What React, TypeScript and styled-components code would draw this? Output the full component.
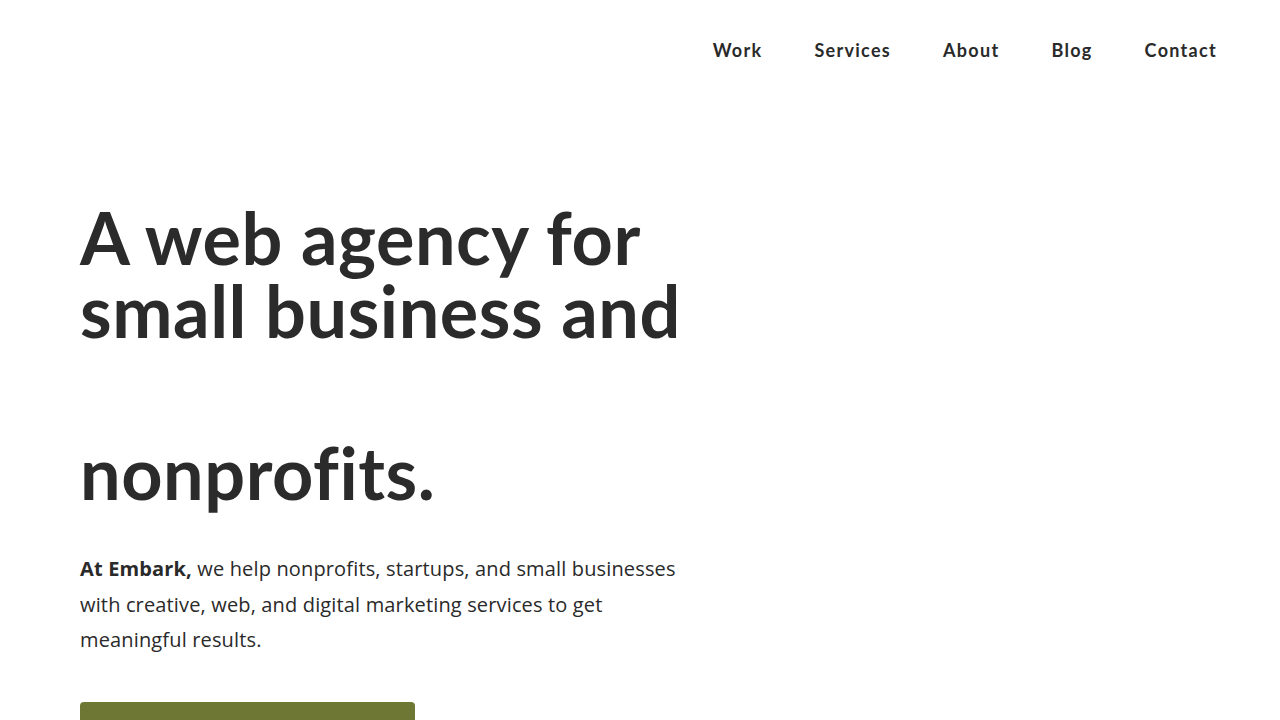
import styled, { createGlobalStyle } from "styled-components";

const GlobalStyle = createGlobalStyle`
  html, body {
    margin: 0;
    padding: 0;
    background: #ffffff;
  }
  body {
    font-family: "Lato", "Liberation Sans", sans-serif;
    color: #2a2a2a;
  }
`;

const navLinks = ["Work", "Services", "About", "Blog", "Contact"];

export default function App() {
  return (
    <Page>
      <GlobalStyle />
      <Header>
        <Nav>
          {navLinks.map((link) => (
            <NavLink key={link} href="#">
              {link}
            </NavLink>
          ))}
        </Nav>
      </Header>

      <Hero>
        <Heading>
          <HeadingLine>A web agency for</HeadingLine>
          <HeadingLine>small business and</HeadingLine>
          <HeadingLine $gap>nonprofits.</HeadingLine>
        </Heading>
        <Intro>
          <strong>At Embark,</strong> we help nonprofits, startups, and small
          businesses with creative, web, and digital marketing services to get
          meaningful results.
        </Intro>
        <CtaButton href="#">Let&apos;s work together</CtaButton>
      </Hero>
    </Page>
  );
}

const Page = styled.div`
  width: 1280px;
  height: 720px;
  overflow: hidden;
`;

const Header = styled.header`
  display: flex;
  justify-content: flex-end;
  padding: 36px 63px 0 80px;
`;

const Nav = styled.nav`
  display: flex;
  gap: 52px;
`;

const NavLink = styled.a`
  font-family: "Lato", "Liberation Sans", sans-serif;
  font-size: 18px;
  font-weight: 700;
  letter-spacing: 1.3px;
  color: #2a2a2a;
  text-decoration: none;
  line-height: 28px;
`;

const Hero = styled.section`
  padding: 137px 80px 0;
  width: 640px;
`;

const Heading = styled.h1`
  margin: 0;
  font-family: "Lato", "Liberation Sans", sans-serif;
  font-size: 72px;
  font-weight: 700;
  line-height: 73px;
  letter-spacing: 0.55px;
  color: #2b2b2b;
  white-space: nowrap;
`;

const HeadingLine = styled.span<{ $gap?: boolean }>`
  display: block;
  margin-top: ${(props) => (props.$gap ? "89px" : "0")};
`;

const Intro = styled.p`
  margin: 42px 0 0;
  font-family: "Open Sans", "Liberation Sans", sans-serif;
  font-size: 20px;
  line-height: 35.5px;
  letter-spacing: 0.15px;
  color: #2a2a2a;
  width: 610px;

  strong {
    font-weight: 700;
  }
`;

const CtaButton = styled.a`
  display: block;
  box-sizing: border-box;
  margin-top: 44px;
  width: 335px;
  height: 64px;
  padding-top: 24px;
  border-radius: 4px;
  background: #6e7834;
  color: #ffffff;
  font-family: "Lato", "Liberation Sans", sans-serif;
  font-size: 18px;
  font-weight: 700;
  text-align: center;
  text-decoration: none;
`;
